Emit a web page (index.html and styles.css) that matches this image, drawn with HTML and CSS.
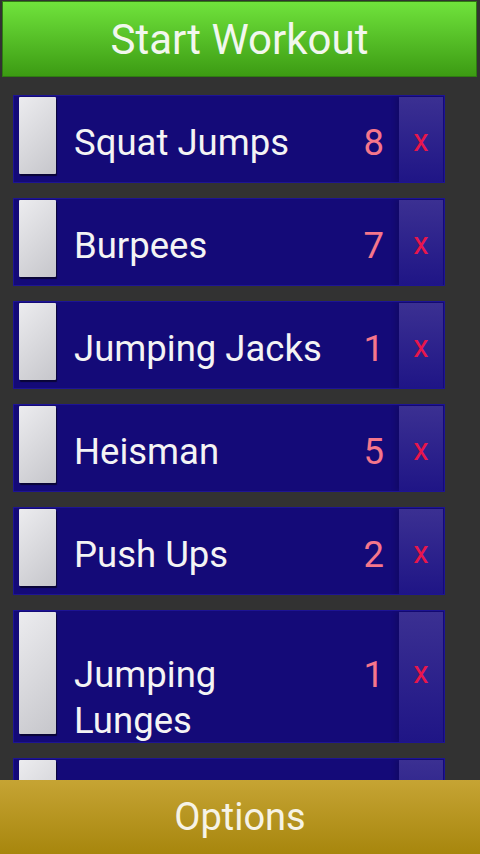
FILE: index.html
```html
<!DOCTYPE HTML>
<html>
<head>
	<meta http-equiv="Content-Type" content="text/html; charset=utf-8">
	<meta name="viewport" content="width=device-width, minimum-scale=1.0, initial-scale=1, user-scalable=yes">
	<title>Workout</title>
	<link rel="stylesheet" href="styles.css">
</head>
<body>
	<header>Start Workout</header>

	<section class="list">
		<div class="item">
			<span class="check"></span>
			<label>Squat Jumps</label>
			<span class="count">8</span>
			<span class="del">x</span>
		</div>
		<div class="item">
			<span class="check"></span>
			<label>Burpees</label>
			<span class="count">7</span>
			<span class="del">x</span>
		</div>
		<div class="item">
			<span class="check"></span>
			<label>Jumping Jacks</label>
			<span class="count">1</span>
			<span class="del">x</span>
		</div>
		<div class="item">
			<span class="check"></span>
			<label>Heisman</label>
			<span class="count">5</span>
			<span class="del">x</span>
		</div>
		<div class="item">
			<span class="check"></span>
			<label>Push Ups</label>
			<span class="count">2</span>
			<span class="del">x</span>
		</div>
		<div class="item tall">
			<span class="check"></span>
			<label>Jumping Lunges</label>
			<span class="count">1</span>
			<span class="del">x</span>
		</div>
		<!-- next row, scrolled under the options bar -->
		<div class="item">
			<span class="check"></span>
			<label></label>
			<span class="count"></span>
			<span class="del"></span>
		</div>
	</section>

	<footer>Options</footer>
</body>
</html>
```

FILE: styles.css
```css
	body{
		margin: 0;
		height: 854px;
		display: flex;
		flex-direction: column;
		background-color: #323232;
		font-family: Roboto, "Liberation Sans", sans-serif;
		color: #f4f4f4;
	}
	header{
		flex-shrink: 0;
		box-sizing: border-box;
		height: 76px;
		margin: 1px 3px 0 2px;
		border: 1px solid #2f7a12;
		background: linear-gradient(#70e33c, #3c9b13);
		font-size: 42px;
		line-height: 76px;
		text-align: center;
		color: #f2f7ee;
	}

	.list{
		flex: 1;
		min-height: 0;
		overflow: hidden;
		padding-top: 18px;
	}
	.item{
		box-sizing: border-box;
		display: flex;
		align-items: flex-start;
		width: 432px;
		height: 88px;
		margin: 0 0 15px 13px;
		padding: 1px 1px 0 5px;
		border: 1px solid #1d1494;
		background-color: #140a78;
		overflow: hidden;
	}
	.item.tall{
		height: 133px;
	}
	.check{
		align-self: stretch;
		width: 37px;
		margin-bottom: 8px;
		border-radius: 1px;
		background: linear-gradient(135deg, #ececef, #c6c6cb);
		box-shadow: 1px 2px 1px rgba(0,0,0,.55);
	}
	.item label, .item .count{
		padding-top: 23px;
		font-size: 36.5px;
		line-height: 46px;
	}
	.item label{
		flex: 0 0 256px;
		margin-left: 18px;
	}
	.item .count{
		flex: 1;
		padding-right: 15px;
		text-align: right;
		color: #f5768b;
	}
	.del{
		align-self: stretch;
		width: 44px;
		padding-top: 21px;
		box-sizing: border-box;
		text-align: center;
		font-size: 31px;
		line-height: 46px;
		color: #e8164b;
		background: linear-gradient(#3b3092, #1f1586);
		box-shadow: -4px 0 4px rgba(0,0,0,.12);
	}
	.tall label, .tall .count{
		padding-top: 40px;
	}
	.tall .del{
		padding-top: 38px;
	}

	footer{
		flex-shrink: 0;
		height: 74px;
		background: linear-gradient(#c6a434, #a7860d);
		font-size: 38px;
		line-height: 74px;
		text-align: center;
		color: #f6f3e6;
	}
```
